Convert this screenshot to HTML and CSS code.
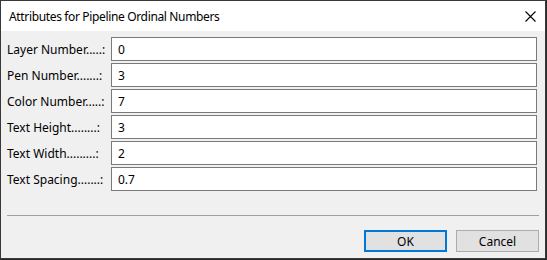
FILE: index.html
```html
<!DOCTYPE html>
<html lang="en">
<head>
    <meta charset="UTF-8">
    <title>Attributes for Pipeline Ordinal Numbers</title>
    <link rel="stylesheet" href="styles.css">
</head>
<body>

    <!-- Ventana de diálogo -->
    <div class="dialog">
        <div class="titlebar">
            <span class="title">Attributes for Pipeline Ordinal Numbers</span>
            <span class="close">
                <svg width="11" height="11" viewBox="0 0 11 11"><path d="M0.5 0.5 L10.5 10.5 M10.5 0.5 L0.5 10.5" stroke="#000" stroke-width="1.1" fill="none"/></svg>
            </span>
        </div>

        <div class="content">
            <div class="fields">
                <label>Layer Number.....:</label>
                <input type="text" value="0">
                <label>Pen Number.......:</label>
                <input type="text" value="3">
                <label>Color Number.....:</label>
                <input type="text" value="7">
                <label>Text Height........:</label>
                <input type="text" value="3">
                <label>Text Width.........:</label>
                <input type="text" value="2">
                <label>Text Spacing.......:</label>
                <input type="text" value="0.7">
            </div>

            <div class="separator"></div>

            <div class="actions">
                <button class="btn default">OK</button>
                <button class="btn">Cancel</button>
            </div>
        </div>
    </div>

</body>
</html>
```

FILE: styles.css
```css
/* Estilos generales */
body {
    margin: 0;
    background-color: #2a2a2a;
    font-family: "Noto Sans", Arial, sans-serif;
    font-size: 12px;
    color: #000;
}

/* Ventana */
.dialog {
    width: 544px;
    height: 257px;
    border: 1px solid #3a3a3a;
    background-color: #f0f0f0;
    display: flex;
    flex-direction: column;
}

/* Barra de título */
.titlebar {
    height: 30px;
    background-color: #fff;
    display: flex;
    align-items: center;
    justify-content: space-between;
    padding: 0 9px 0 8px;
}
.title {
    font-size: 12px;
    letter-spacing: -0.35px;
}
.close {
    display: flex;
    width: 11px;
    height: 11px;
    margin-top: 1px;
}

/* Contenido */
.content {
    padding: 6px 6px 0 6px;
}
.fields {
    display: grid;
    grid-template-columns: 104px 1fr;
    row-gap: 2px;
    padding-right: 2px;
}
.fields label {
    display: flex;
    align-items: center;
    height: 24px;
    white-space: nowrap;
}
.fields input {
    height: 24px;
    box-sizing: border-box;
    border: 1px solid #7a7a7a;
    padding: 0 6px;
    font-family: inherit;
    font-size: 12px;
    background-color: #fff;
    outline: none;
}

/* Línea separadora */
.separator {
    height: 1px;
    background-color: #a0a0a0;
    margin-top: 24px;
}

/* Botones */
.actions {
    display: flex;
    justify-content: flex-end;
    gap: 9px;
    margin-top: 14px;
}
.btn {
    width: 83px;
    height: 22px;
    box-sizing: border-box;
    border: 1px solid #adadad;
    background-color: #e1e1e1;
    font-family: inherit;
    font-size: 12px;
    padding: 0;
    color: #000;
}
.btn.default {
    border: 2px solid #0078d7;
}
```
